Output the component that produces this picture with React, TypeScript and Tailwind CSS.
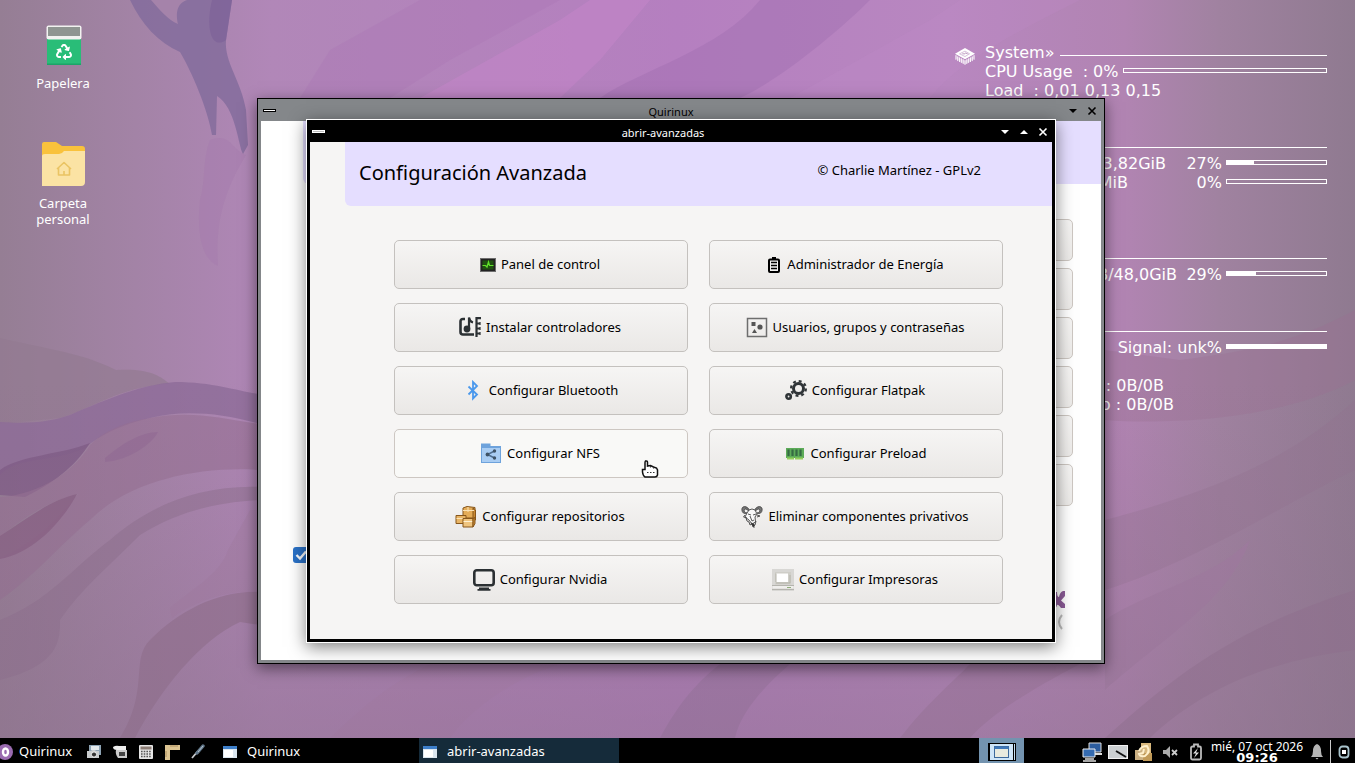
import React from "react";
import { FaRecycle } from "react-icons/fa";

const Wallpaper = () => (
  <svg className="absolute inset-0 h-full w-full" viewBox="0 0 1355 763" preserveAspectRatio="none" aria-hidden="true">
    <defs>
      <linearGradient id="base" x1="0" x2="1" y1="0" y2="0">
        <stop offset="0" stopColor="#957e94" />
        <stop offset="0.1" stopColor="#a383a6" />
        <stop offset="0.2" stopColor="#b187b8" />
        <stop offset="0.5" stopColor="#b57fc0" />
        <stop offset="0.7" stopColor="#b887c0" />
        <stop offset="0.83" stopColor="#b184b2" />
        <stop offset="0.9" stopColor="#a082a0" />
        <stop offset="1" stopColor="#8f7a90" />
      </linearGradient>
      <linearGradient id="fade" x1="0" x2="0" y1="0" y2="1">
        <stop offset="0.5" stopColor="#8f6f8e" stopOpacity="0" />
        <stop offset="1" stopColor="#8c708c" stopOpacity="0.55" />
      </linearGradient>
    </defs>
    <rect width="1355" height="763" fill="url(#base)" />
    <path d="M130 0H232L226 40C224 62 241 80 246 110L248 145L243 154C238 145 236 108 217 96L216 135H212C208 110 192 72 180 52C158 42 142 25 130 0Z" fill="#846c9c" opacity="0.85" />
    <path d="M212 0H232L226 40C212 50 205 30 212 0Z" fill="#7b5f98" opacity="0.6" />
    <path d="M151 0H187C176 4 176 14 178 24C168 20 160 10 151 0Z" fill="#a583aa" />
    <path d="M210 140C230 132 232 150 246 155C225 190 215 220 218 266C204 260 196 240 200 200C206 180 202 160 210 140Z" fill="#a57cae" opacity="0.5" />
    <path d="M300 98L330 50L420 0H560L450 60L390 98Z" fill="#a874b4" opacity="0.3" />
    <path d="M420 98L560 20L590 0H650L600 60L560 98Z" fill="#cb86ce" opacity="0.4" />
    <path d="M600 98C640 70 720 50 760 0H870C840 30 780 80 740 98Z" fill="#9a6bab" opacity="0.35" />
    <path d="M790 98L930 20L960 0H1080C1020 30 960 60 930 98Z" fill="#c08ac8" opacity="0.25" />
    <path d="M0 338C50 350 80 352 116 370C150 368 160 376 170 384C120 386 90 410 60 418L0 424Z" fill="#937a91" opacity="0.7" />
    <path d="M0 422C30 424 50 422 70 415C110 398 140 385 175 382C215 382 240 392 260 394V424C220 412 180 410 150 418C120 425 100 435 85 448C50 464 20 455 0 475Z" fill="#8d6c98" opacity="0.8" />
    <path d="M0 470C20 455 60 455 90 443C78 462 60 480 25 497L0 495Z" fill="#7f5c86" opacity="0.85" />
    <path d="M105 458C120 445 140 432 158 432C152 444 130 460 105 462Z" fill="#8e6899" opacity="0.8" />
    <path d="M150 418C190 410 220 418 260 424V470C200 466 130 480 90 520C60 545 30 580 0 600V558C40 540 60 515 78 494C50 500 20 520 0 537V497C40 495 75 470 90 445C105 430 125 422 150 418Z" fill="#966f92" opacity="0.6" />
    <path d="M0 536C25 520 50 500 77 494C66 515 38 552 0 559Z" fill="#875f82" opacity="0.85" />
    <path d="M260 487C200 485 150 505 110 540C70 570 50 600 0 620V680C60 665 60 640 60 620C80 590 110 565 140 535C180 510 220 502 260 500Z" fill="#8c6e8b" opacity="0.5" />
    <path d="M260 592C220 590 180 610 150 640C130 660 150 690 120 738H135C160 690 200 640 240 622L260 625Z" fill="#93708f" opacity="0.75" />
    <path d="M170 608C190 590 220 575 228 550L250 510H260V592C220 590 190 605 172 618Z" fill="#a57da5" opacity="0.5" />
    <path d="M330 738C380 690 400 680 430 664H560C510 680 470 710 450 738Z" fill="#b07fae" opacity="0.4" />
    <path d="M660 738C680 700 700 680 720 664H790C760 690 740 715 735 738Z" fill="#8f6b96" opacity="0.4" />
    <path d="M900 738C930 700 950 685 970 664H1080C1030 690 990 715 970 738Z" fill="#9b7199" opacity="0.5" />
    <path d="M1105 738C1170 680 1230 630 1355 590V650C1270 660 1200 690 1150 738Z" fill="#8d6c8c" opacity="0.45" />
    <path d="M1105 520C1180 500 1280 470 1355 400V470C1290 500 1200 560 1105 590Z" fill="#92708f" opacity="0.3" />
    <path d="M1105 420C1170 425 1280 420 1355 380V310C1290 345 1240 352 1180 360L1105 350Z" fill="#9b6f91" opacity="0.35" />
    <path d="M1105 620C1150 590 1210 580 1250 540C1230 600 1160 640 1105 690Z" fill="#a47ba3" opacity="0.6" />
    <rect width="1355" height="763" fill="url(#fade)" />
  </svg>
);

const Bar = ({ percent, wide = false }: { percent: number; wide?: boolean }) => (
  <div className={wide ? "mb-0.5 h-[5px] flex-1 border border-white" : "mb-0.5 h-[5px] w-[101px] border border-white"}>
    <div className="h-full bg-white" style={{ width: `${percent}%` }} />
  </div>
);

const Monitor = () => (
  <section
    aria-label="System monitor"
    className="absolute top-[43px] right-7 flex w-[372px] items-start gap-2.5 text-[16px] leading-[19px] whitespace-pre text-white [font-family:'DejaVu_Sans',sans-serif]"
  >
    <svg className="mt-1 h-5 w-5 shrink-0" viewBox="0 0 22 20" aria-hidden="true">
      <path d="M11 0L22 6.500L11 12.500L0 6.500Z" fill="#fff" />
      <path d="M5 6.500L11 3.500L16 6.500L11 9.500Z" fill="none" stroke="#c9aacd" strokeWidth="0.800" />
      <path d="M8 6.500h3M11 5.500l3 1" stroke="#b58fba" />
      <path d="M1 8V12L11 18.500L21 12V8L11 14Z" fill="#fff" opacity="0.3" />
      <path d="M1 8v5M3 9.500v5M5 10.500v5M7 11.500v5M9 12.500v5M11 13.500v5M13 12.500v5M15 11.500v5M17 10.500v5M19 9.500v5M21 8v5" stroke="#fff" strokeWidth="1" />
    </svg>
    <div className="flex flex-1 flex-col">
      <div className="flex items-center gap-1.5"><span>System»</span><hr className="mt-1.5 flex-1 border-white" /></div>
      <div className="flex items-center gap-1"><span>CPU Usage  : 0%</span><Bar wide percent={0} /></div>
      <div>Load  : 0,01 0,13 0,15</div>
      <hr className="mt-[47px] mb-1.5 border-white" />
      <div className="flex items-center justify-end"><span>3,82GiB</span><span className="mr-1 w-14 text-right">27%</span><Bar percent={27} /></div>
      <div className="flex items-center justify-end"><span>MiB</span><span className="mr-1 w-[94px] text-right">0%</span><Bar percent={0} /></div>
      <hr className="mt-[66px] mb-1.5 border-white" />
      <div className="flex items-center justify-end"><span>B/48,0GiB</span><span className="mr-1 w-[45px] text-right">29%</span><Bar percent={29} /></div>
      <hr className="mt-[47px] mb-1.5 border-white" />
      <div className="flex items-center justify-end gap-1"><span>Signal: unk%</span><Bar percent={100} /></div>
      <div className="mt-[19px] pr-[163px] text-right">: 0B/0B</div>
      <div className="pr-[153px] text-right">p : 0B/0B</div>
    </div>
  </section>
);

const Trash = () => (
  <div className="relative h-11 w-11">
    <svg className="h-11 w-11" viewBox="0 0 44 44" aria-hidden="true">
      <rect x="6" y="14" width="34" height="28" rx="1" fill="#29bd78" />
      <rect x="5.500" y="2.500" width="35" height="14" rx="2" fill="#f2f2f0" />
      <rect x="7" y="4" width="32" height="9" fill="#8f9591" />
      <rect x="6" y="40.500" width="34" height="1.500" fill="#1da468" />
    </svg>
    <FaRecycle className="absolute top-[21px] left-[15px] h-4 w-4 text-white" />
  </div>
);

const HomeFolder = () => (
  <svg className="h-11 w-11" viewBox="0 0 44 44" aria-hidden="true">
    <path d="M1 2Q1 0 3 0H15L21 4H41Q44 4 44 7V20H1Z" fill="#f9c23c" />
    <path d="M1 14Q1 12 4 12H18Q21 12 23 9H44V40Q44 44 40 44H1Z" fill="#fbe3a4" />
    <path d="M16 27L23 20.500L30 27M17.500 26V33H28.500V26M23 33V29" fill="none" stroke="#eac463" strokeWidth="1.600" strokeLinejoin="round" />
  </svg>
);

const PanelIcon = () => (
  <svg className="h-4 w-4" viewBox="0 0 16 16" aria-hidden="true">
    <rect x="0.500" y="1.500" width="15" height="13" fill="#222" stroke="#6d6d6d" />
    <rect x="2.500" y="3.500" width="11" height="9" fill="#1f5210" />
    <path d="M2.500 8.500H5.500L7 10L8.500 5L9.500 8.500H13.500" fill="none" stroke="#62e22c" strokeWidth="1.200" />
  </svg>
);
const BatteryIcon = () => (
  <svg className="h-4 w-4" viewBox="0 0 16 16" aria-hidden="true">
    <path d="M6 0H10V1.500H12Q14 1.500 14 3.500V14Q14 16 12 16H4Q2 16 2 14V3.500Q2 1.500 4 1.500H6Z" fill="#000" />
    <path d="M4 3.500H12V14H4Z" fill="#f3f3f2" />
    <path d="M5 5.500H11M5 8.500H11M5 11.500H11" stroke="#000" strokeWidth="1.500" />
  </svg>
);
const DriverIcon = () => (
  <svg className="h-[22px] w-[22px]" viewBox="0 0 22 22" aria-hidden="true" fill="none" stroke="#2b3033">
    <path d="M6 2H4Q1.500 2 1.500 4.500V15Q1.500 17.500 4 17.500H15" strokeWidth="2.600" />
    <circle cx="8" cy="12" r="3.400" fill="#2b3033" stroke="none" />
    <path d="M10 12V0.500Q10.500 4.500 14 5.500" strokeWidth="2.200" />
    <path d="M17.500 0V20M17 1.200H22M17 6.500H21M17 11.500H21M17 16.500H21" strokeWidth="2.200" />
    <path d="M21 5V8M21 10V13M21 15V18" strokeWidth="1.200" />
  </svg>
);
const UsersIcon = () => (
  <svg className="h-[22px] w-[22px]" viewBox="0 0 22 22" aria-hidden="true">
    <rect x="1.500" y="1.500" width="19" height="18" fill="none" stroke="#6e6e6e" strokeWidth="1.500" />
    <rect x="5.500" y="5" width="4" height="4" fill="#555" />
    <circle cx="14" cy="10" r="2.600" fill="#555" />
    <path d="M8.500 12L11 16H6Z" fill="#555" />
  </svg>
);
const BluetoothGlyph = () => (
  <svg className="h-[22px] w-[22px]" viewBox="0 0 22 22" aria-hidden="true">
    <path d="M6.500 6.500L15 14.500L11 18.500V2L15 6L6.500 14.500" fill="none" stroke="#4a98ec" strokeWidth="1.800" />
  </svg>
);
const GearsIcon = () => (
  <svg className="h-[22px] w-[22px]" viewBox="0 0 22 22" aria-hidden="true" fill="none" stroke="#2f3437">
    <circle cx="13.500" cy="8.500" r="5" strokeWidth="3" />
    <circle cx="13.500" cy="8.500" r="7.400" strokeWidth="2.200" strokeDasharray="2.900 2.911" />
    <circle cx="3.600" cy="16.500" r="2.200" strokeWidth="2.600" />
  </svg>
);
const NfsIcon = () => (
  <svg className="h-[22px] w-[22px]" viewBox="0 0 22 22" aria-hidden="true">
    <path d="M1 0.500H10.500V3H21V20H1Z" fill="#6ea3dc" />
    <rect x="2" y="5" width="18" height="14" fill="#a9cdf3" />
    <path d="M14.500 8L7.500 11.500L14.500 15" fill="none" stroke="#4e6d8e" strokeWidth="1.400" />
    <circle cx="14.500" cy="8" r="1.700" fill="#3f5366" /><circle cx="7.500" cy="11.500" r="1.900" fill="#3f5366" /><circle cx="14.500" cy="15" r="1.700" fill="#3f5366" />
  </svg>
);
const MemoryIcon = () => (
  <svg className="h-[22px] w-[22px]" viewBox="0 0 22 22" aria-hidden="true">
    <rect x="2" y="5" width="18" height="10" fill="#5cab58" />
    <path d="M4.500 6.500V13M8.500 6.500V13M12.500 6.500V13M16.500 6.500V13" stroke="#356b43" strokeWidth="2.200" />
    <path d="M3 15.500H10M11 15.500H19" stroke="#94cf5c" strokeWidth="2" />
  </svg>
);
const PackagesIcon = () => (
  <svg className="h-[22px] w-[22px]" viewBox="0 0 22 22" aria-hidden="true" stroke="#87561b">
    <path d="M8 2L12 0.500L20 1.500V12H8Z" fill="#e4ac58" />
    <path d="M18 2L20.500 4V14L18 12Z" fill="#c98a35" />
    <path d="M8 4.500H19M13 1V6" fill="none" stroke="#fbe2b4" />
    <path d="M1 9.500H11V17.500H1Z" fill="#e8b566" />
    <path d="M1.500 12.500H10.500" stroke="#fbe2b4" />
    <path d="M8 12.500H18V21H8Z" fill="#efc47e" />
    <path d="M8.500 15.500H17.500" stroke="#fdf0d3" />
    <path d="M18 12.500L20 11.500V17.500L18 21Z" fill="#c98a35" />
  </svg>
);
const GnuIcon = () => (
  <svg className="h-[22px] w-[22px]" viewBox="0 0 22 22" aria-hidden="true" fill="none" stroke="#444" strokeWidth="0.900">
    <path d="M8 3.500C6 -0.500 0 -0.500 1 4.500C1.500 7.500 4 8 6 7C3 7 2.500 4 4 3C5.500 2.500 6 4.500 8 4.500ZM14 3.500C16 -0.500 22 -0.500 21 4.500C20.500 7.500 18 8 16 7C19 7 19.500 4 18 3C16.500 2.500 16 4.500 14 4.500Z" fill="#777" />
    <path d="M8 4Q11 2 14 4L16 8L14 11L14.500 16L11 18L8 14L4 11L6 7Z" fill="#f8f8f8" />
    <path d="M4 9L2.500 11L6 12M7 8L10 9M12 9L15 8M9 10L11 15L13 14M5 12L6 15L8 16L9 19L11 18L12 21L14 19L15 15M16 9L19 10L16 11" />
    <path d="M10 17L13 21.500V18Z" fill="#222" />
  </svg>
);
const DisplayIcon = () => (
  <svg className="h-[22px] w-[22px]" viewBox="0 0 22 22" aria-hidden="true" fill="none" stroke="#2b3033">
    <rect x="1.300" y="1.300" width="19.400" height="15" rx="2.500" strokeWidth="2.600" />
    <path d="M6 19.500H16M4.500 20.800H17.500" strokeWidth="1.800" />
  </svg>
);
const PrinterIcon = () => (
  <svg className="h-[22px] w-[22px]" viewBox="0 0 22 22" aria-hidden="true">
    <rect width="22" height="22" fill="#d8d7d4" />
    <rect x="3" y="3" width="16" height="12.500" fill="#cfcec8" />
    <path d="M4 4.500H16V13H4Z" fill="#fff" />
    <path d="M4 4.500V13M4 14H18V6" fill="none" stroke="#b5b4aa" />
    <rect x="0.500" y="17" width="21" height="2.500" fill="#efeeec" />
    <path d="M0 16.500H22M0 20.500H22" stroke="#b5b4ae" />
    <rect x="15" y="18" width="4" height="1" fill="#8fae7a" />
  </svg>
);

const actions: { label: string; Icon: () => React.JSX.Element }[] = [
  { label: "Panel de control", Icon: PanelIcon },
  { label: "Administrador de Energía", Icon: BatteryIcon },
  { label: "Instalar controladores", Icon: DriverIcon },
  { label: "Usuarios, grupos y contraseñas", Icon: UsersIcon },
  { label: "Configurar Bluetooth", Icon: BluetoothGlyph },
  { label: "Configurar Flatpak", Icon: GearsIcon },
  { label: "Configurar NFS", Icon: NfsIcon },
  { label: "Configurar Preload", Icon: MemoryIcon },
  { label: "Configurar repositorios", Icon: PackagesIcon },
  { label: "Eliminar componentes privativos", Icon: GnuIcon },
  { label: "Configurar Nvidia", Icon: DisplayIcon },
  { label: "Configurar Impresoras", Icon: PrinterIcon },
];

const TitleBar = ({ title, active }: { title: string; active: boolean }) => (
  <header className={active ? "flex h-[22px] items-center bg-black px-[5px] text-[11px] text-white" : "flex h-[22px] items-center bg-[#84878a] px-[5px] text-[11px] text-black"}>
    <button aria-label="Menú" className="flex h-5 w-5 items-center">
      <svg className="h-[3px] w-[13px]" viewBox="0 0 13 3"><rect width="13" height="3" fill={active ? "#fff" : "#000"} /><rect x="1" y="1" width="11" height="1" fill={active ? "#bbb" : "#fff"} /></svg>
    </button>
    <h2 className="flex-1 pt-1 text-center">{title}</h2>
    <div className={active ? "flex w-14 items-center justify-end gap-[9px] pt-0.5 pr-0.5" : "flex w-10 items-center justify-end gap-[9px] pt-0.5 pr-0.5"}>
      <button aria-label="Minimizar"><svg className="h-2.5 w-2.5" viewBox="0 0 10 10"><path d="M1 3H9L5 7Z" fill="currentColor" /></svg></button>
      {active && <button aria-label="Maximizar"><svg className="h-2.5 w-2.5" viewBox="0 0 10 10"><path d="M1 7H9L5 3Z" fill="currentColor" /></svg></button>}
      <button aria-label="Cerrar"><svg className="h-2.5 w-2.5" viewBox="0 0 10 10"><path d="M1.500 1.500L8.500 8.500M8.500 1.500L1.500 8.500" stroke="currentColor" strokeWidth="1.600" /></svg></button>
    </div>
  </header>
);

const MainWindow = () => (
  <section aria-label="Quirinux" className="absolute top-[98px] left-[257px] flex h-[566px] w-[848px] flex-col border border-black bg-[#84878a] shadow-[0_4px_14px_rgba(0,0,0,0.5)]">
    <TitleBar title="Quirinux" active={false} />
    <div className="relative mx-[3px] mb-[3px] flex flex-1 flex-col bg-white">
      <div className="ml-[42px] h-[63px] rounded-bl-md bg-[#e5deff]" />
      <div className="mt-[35px] mr-7 flex flex-col items-end gap-[7px]">
        {[1, 2, 3, 4, 5, 6].map((n) => (
          <button key={n} aria-label={`Opción ${n}`} className="h-[42px] w-72 rounded-[5px] border border-[#cdc7c2] bg-linear-to-b from-[#f6f5f4] to-[#edebe9]" />
        ))}
      </div>
      <label className="mt-[41px] ml-8 flex">
        <input type="checkbox" defaultChecked aria-label="Mostrar al inicio" className="peer h-4 w-4 appearance-none rounded-[3px] bg-[#2b72c8]" />
        <svg className="pointer-events-none -ml-4 h-4 w-4" viewBox="0 0 16 16"><path d="M3.500 8L7 11.500L13 4.500" fill="none" stroke="#fff" strokeWidth="2.400" /></svg>
      </label>
      <svg className="mt-7 mr-9 h-10 w-6 self-end" viewBox="0 0 24 40" aria-hidden="true">
        <path d="M10 1H16Q16 6 18 6Q19 1 22 0H24V5L20 9.500L24 13V17H20Q17 13 16 14Q15 19 10 17Z" fill="#8b5b97" />
        <path d="M21 24Q15 31 21 38" fill="none" stroke="#bbb" strokeWidth="2" />
      </svg>
    </div>
  </section>
);

const AdvancedWindow = () => (
  <section aria-label="abrir-avanzadas" className="absolute top-[119px] left-[306px] flex h-[524px] w-[750px] flex-col border border-white bg-black shadow-[0_4px_16px_rgba(0,0,0,0.5)]">
    <TitleBar title="abrir-avanzadas" active />
    <div className="mx-[3px] mb-[3px] flex flex-1 flex-col bg-[#f6f5f4] text-black">
      <div className="ml-[35px] flex h-16 items-center justify-between rounded-bl-md bg-[#e5deff] pr-[71px] pb-1.5 pl-3.5">
        <h1 className="pt-1 text-[20px]">Configuración Avanzada</h1>
        <p className="text-[13px]">© Charlie Martínez - GPLv2</p>
      </div>
      <div className="mt-[34px] mr-[49px] ml-[84px] grid grid-cols-2 gap-x-[21px] gap-y-3.5">
        {actions.map(({ label, Icon }) => (
          <button
            key={label}
            className={
              label === "Configurar NFS"
                ? "flex h-[49px] items-center justify-center gap-[5px] rounded-[5px] border border-[#cdc7c2] bg-[#f9f9f7] pr-0.5 text-[13px]"
                : "flex h-[49px] items-center justify-center gap-[5px] rounded-[5px] border border-[#c4c1be] bg-linear-to-b from-[#f6f5f4] to-[#eae8e6] pr-0.5 text-[13px]"
            }
          >
            <Icon />
            <span>{label}</span>
          </button>
        ))}
      </div>
    </div>
  </section>
);

const WindowIcon = () => (
  <svg className="h-3.5 w-3.5 shrink-0" viewBox="0 0 14 14" aria-hidden="true">
    <rect y="1" width="14" height="12" fill="#dbe6ef" /><rect y="1" width="14" height="3" fill="#3e7fc9" /><rect x="1" y="5" width="9" height="7" fill="#fff" />
  </svg>
);

const Taskbar = () => (
  <footer className="relative z-10 flex h-[25px] items-center overflow-hidden bg-black pt-0.5 text-[13px] text-white">
    <button className="flex w-[81px] items-center gap-1.5">
      <svg className="h-4 w-[13px]" viewBox="0 0 13 16" aria-hidden="true"><circle cx="5" cy="8" r="8" fill="#9a6bb0" /><ellipse cx="5.500" cy="8" rx="2.500" ry="3.500" fill="none" stroke="#fff" strokeWidth="2.400" /></svg>
      <span>Quirinux</span>
    </button>
    <nav aria-label="Lanzadores" className="flex w-[138px] gap-2.5 pl-[5px]">
      <button aria-label="Capturador"><svg className="h-4 w-4" viewBox="0 0 16 16"><path d="M3 1H15V11H3Z" fill="#8da3b4" /><path d="M5 2H13V6H5Z" fill="#e4e9ec" /><path d="M1 7H5L6 6H9L10 7H13V14H1Z" fill="#c9cccd" /><circle cx="8" cy="10.500" r="2.600" fill="#333" stroke="#eee" /></svg></button>
      <button aria-label="Grabador"><svg className="h-4 w-4" viewBox="0 0 16 16"><path d="M1 3Q4 1 7 2H14V6H5Q1 6 1 3Z" fill="#eee" /><path d="M4 6H15V14H6Q3 10 4 6Z" fill="#ccc" /><rect x="7" y="8" width="6" height="4" fill="#444" /></svg></button>
      <button aria-label="Calculadora"><svg className="h-4 w-4" viewBox="0 0 16 16"><rect x="1" y="1" width="14" height="14" rx="1" fill="#e6e6e6" /><rect x="2.500" y="2.500" width="11" height="3" fill="#8b7c74" /><path d="M3 7.500H13M3 10H13M3 12.500H13" stroke="#555" strokeWidth="1.500" strokeDasharray="1.600 1.100" /></svg></button>
      <button aria-label="Regla"><svg className="h-4 w-4" viewBox="0 0 16 16"><path d="M1 1H16V6H6V16H1Z" fill="#dcc492" /><path d="M7 1V3M9 1V3M11 1V3M13 1V3M1 8H3M1 10H3M1 12H3" stroke="#96794a" strokeWidth="0.700" /></svg></button>
      <button aria-label="Selector de color"><svg className="h-4 w-4" viewBox="0 0 16 16"><path d="M2 14L8 7" stroke="#c8ccd0" strokeWidth="1.800" /><path d="M7 9L13 2" stroke="#62788b" strokeWidth="3.400" strokeLinecap="round" /><path d="M8 8L13 2" stroke="#b6c4d0" strokeWidth="1" /></svg></button>
    </nav>
    <button className="flex w-[200px] items-center gap-2.5 pl-1"><WindowIcon />Quirinux</button>
    <button className="-mt-0.5 flex h-[25px] w-[200px] items-center gap-2.5 bg-[#152b3a] pt-0.5 pl-1"><WindowIcon />abrir-avanzadas</button>
    <button aria-label="Área de trabajo 1" className="-mt-0.5 ml-auto flex h-[25px] w-[45px] items-center justify-center bg-[#7393af] pt-0.5">
      <svg className="h-[18px] w-7" viewBox="0 0 28 18"><rect x="0.500" y="0.500" width="27" height="17" fill="#c5ddf2" stroke="#000" /><rect x="1.500" y="0.500" width="24" height="17" fill="#cfe5f8" stroke="#000" /><rect x="6.500" y="3.500" width="14" height="11" fill="#e9eadf" stroke="#3d689b" /><rect x="6.500" y="3.500" width="14" height="2.500" fill="#3f77b8" /></svg>
    </button>
    <div className="flex items-center gap-1.5 pl-[58px]">
      <svg className="h-5 w-5" viewBox="0 0 20 20"><path d="M7 1H19V10H7Z" fill="#2c5d9f" stroke="#ddd" /><path d="M12 11H20V13H12Z" fill="#ddd" /><path d="M1 7H13V15H1Z" fill="#356bb0" stroke="#eee" /><path d="M3 17H12M1 19H14" stroke="#ddd" strokeWidth="1.500" /></svg>
      <svg className="h-5 w-5" viewBox="0 0 20 20"><rect x="0.500" y="3.500" width="19" height="13" fill="#ccd0d2" stroke="#f2f2f2" /><path d="M8 9L18 15" stroke="#111" strokeWidth="2" /></svg>
      <svg className="h-5 w-5" viewBox="0 0 20 20"><path d="M7 1H17V13H7Z" fill="#d8b87d" /><path d="M1 8H11V18H1Z" fill="#cbb082" /><path d="M9 11H18V19H9Z" fill="#c19a58" /><path d="M5 9Q7 4 13 4Q17 10 11 14Q6 15 5 12L9 11L10 7" fill="none" stroke="#fff0cc" strokeWidth="2" /></svg>
      <svg className="h-5 w-5" viewBox="0 0 20 20"><path d="M3 8H6L10 4V16L6 12H3Z" fill="#aaa" /><path d="M12 8L17 13M17 8L12 13" stroke="#ccc" strokeWidth="1.800" /></svg>
      <svg className="h-5 w-5" viewBox="0 0 20 20"><path d="M8 2.500H12V4.500H13.500Q15 4.500 15 6V16Q15 17.500 13.500 17.500H6.500Q5 17.500 5 16V6Q5 4.500 6.500 4.500H8Z" fill="none" stroke="#bbb" strokeWidth="1.800" /><path d="M12 6L7 11.500H10L8 16L13 10.500H10Z" fill="#ddd" /></svg>
    </div>
    <time dateTime="2026-10-07T09:26" className="-mt-0.5 flex h-[25px] w-[102px] flex-col items-center pt-0.5 whitespace-nowrap">
      <span className="text-[12px] leading-[13px]">mié, 07 oct 2026</span>
      <strong className="text-[13px] leading-[10px] [font-family:'DejaVu_Sans',sans-serif]">09:26</strong>
    </time>
    <svg className="ml-0.5 h-4 w-3.5" viewBox="0 0 14 16" aria-hidden="true"><path d="M7 0Q3 1.500 3 7Q3 11 1 13H13Q11 11 11 7Q11 1.500 7 0ZM5.500 14H8.500L7 15.500Z" fill="#b5b5b5" /></svg>
    <div className="mx-1.5 h-full w-px bg-[#ccc]" />
    <svg className="mr-1 h-3.5 w-3.5" viewBox="0 0 14 14" aria-hidden="true"><rect x="2.500" y="1.500" width="9" height="11" rx="3" fill="none" stroke="#a9c3cc" strokeWidth="1.800" /><rect x="5" y="5" width="4" height="4" fill="#fff" /></svg>
  </footer>
);

export default function App() {
  return (
    <div className="relative flex min-h-screen flex-col overflow-hidden bg-[#a07f9f] [font-family:'Noto_Sans',sans-serif]">
      <Wallpaper />
      <main className="relative flex-1">
        <div className="flex w-[126px] flex-col gap-[51px] pt-[23px] text-center text-[13px] leading-4 text-white [text-shadow:1px_1px_1px_#000]">
          <button className="flex flex-col items-center gap-2"><Trash /><span>Papelera</span></button>
          <button className="flex flex-col items-center gap-[9px]"><HomeFolder /><span className="w-16">Carpeta personal</span></button>
        </div>
        <Monitor />
        <MainWindow />
        <AdvancedWindow />
        <svg className="pointer-events-none absolute top-[460px] left-[641px] h-[18px] w-[18px]" viewBox="0 0 18 18" aria-hidden="true">
          <path d="M4.500 1Q6.500 0.500 6.500 2.500V6L9.500 5.500L12.500 7L15.500 8L16.500 10V15Q16 17 14 17H4Q2 16 1.500 12V9.500L4 9.500V3Q4 1.500 4.500 1Z" fill="#fff" stroke="#111" strokeWidth="1.500" />
          <path d="M9.500 6V9M12.500 7V9.500M6 12.500H14" stroke="#333" strokeDasharray="1.500 1.500" />
        </svg>
      </main>
      <Taskbar />
    </div>
  );
}
